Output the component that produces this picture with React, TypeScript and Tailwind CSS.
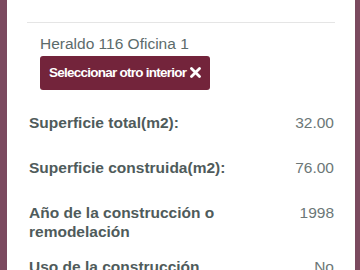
import React from "react";

const rows: { label: string; value: string }[] = [
  { label: "Superficie total(m2):", value: "32.00" },
  { label: "Superficie construida(m2):", value: "76.00" },
  { label: "Año de la construcción o remodelación", value: "1998" },
  { label: "Uso de la construcción", value: "No" },
];

export default function App() {
  return (
    <div className="h-[270px] w-[360px] overflow-hidden bg-[#7b4a5f] pl-[7px] pr-[5px] font-['Liberation_Sans',Arial,sans-serif]">
      <div className="h-full bg-white px-[20px] pt-[22px]">
        <div className="h-px bg-[#e5e5e5]" />
        <div className="pl-[13px] pt-[11px]">
          <div className="text-[15.5px] leading-[20px] text-[#5c6b6b]">Heraldo 116 Oficina 1</div>
          <button
            type="button"
            className="mt-[2px] flex h-[34px] items-center gap-[4px] rounded-[3px] bg-[#73243b] px-[9px] text-white"
          >
            <span className="text-[13.5px] font-bold leading-none tracking-[-0.75px]">
              Seleccionar otro interior
            </span>
            <svg width="11" height="11" viewBox="0 0 11 11" className="mb-[1px]">
              <path d="M1.5 1.5 L9.5 9.5 M9.5 1.5 L1.5 9.5" stroke="white" strokeWidth="2.8" strokeLinecap="round" />
            </svg>
          </button>
        </div>
        <div className="mt-[23px] flex flex-col gap-[16px] pl-[2px] pr-[1px]">
          {rows.map((r) => (
            <div key={r.label} className="flex min-h-[29px] items-start text-[15.5px] leading-[19px]">
              <div className="w-[203px] font-bold text-[#4f5b5b]">{r.label}</div>
              <div className="flex-1 text-right text-[#6c7777]">{r.value}</div>
            </div>
          ))}
        </div>
      </div>
    </div>
  );
}
